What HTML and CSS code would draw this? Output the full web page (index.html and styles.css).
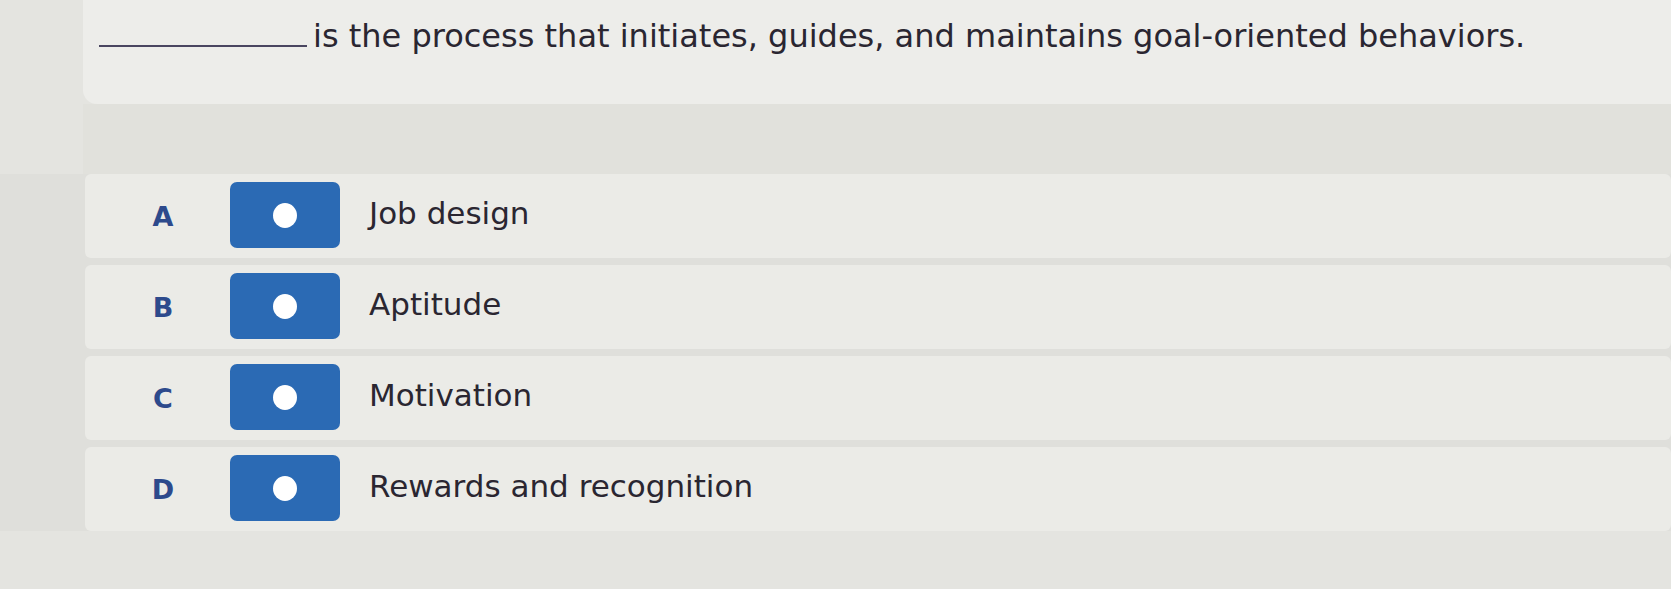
FILE: index.html
```html
<!DOCTYPE html>
<html>
<head>
<meta charset="utf-8">
<link rel="stylesheet" href="styles.css">
</head>
<body>
<div class="page">
  <div class="question-card">
    <p class="question"><span class="blank"></span> is the process that initiates, guides, and maintains goal-oriented behaviors.</p>
  </div>
  <div class="band"></div>
  <ul class="options">
    <li class="option">
      <span class="letter">A</span>
      <span class="radio"><span class="dot"></span></span>
      <span class="label">Job design</span>
    </li>
    <li class="option">
      <span class="letter">B</span>
      <span class="radio"><span class="dot"></span></span>
      <span class="label">Aptitude</span>
    </li>
    <li class="option">
      <span class="letter">C</span>
      <span class="radio"><span class="dot"></span></span>
      <span class="label">Motivation</span>
    </li>
    <li class="option">
      <span class="letter">D</span>
      <span class="radio"><span class="dot"></span></span>
      <span class="label">Rewards and recognition</span>
    </li>
  </ul>
</div>
</body>
</html>
```
FILE: styles.css
```css
html, body {
  margin: 0;
  padding: 0;
}
body {
  width: 1671px;
  height: 589px;
  overflow: hidden;
  background: #e4e4e0;
  font-family: "DejaVu Sans", sans-serif;
  color: #2a2631;
}
.page {
  display: flex;
  flex-direction: column;
}
.question-card {
  margin-left: 83px;
  height: 104px;
  background: #ededea;
  border-bottom-left-radius: 14px;
  box-sizing: border-box;
  padding: 16px 0 0 16px;
}
.question {
  margin: 0;
  font-size: 32px;
  line-height: 40px;
  display: flex;
  align-items: baseline;
  gap: 6px;
  white-space: nowrap;
}
.blank {
  display: inline-block;
  width: 208px;
  height: 0;
  border-bottom: 2px solid #4a4660;
}
.band {
  height: 70px;
  background: #e1e1dc;
  margin-left: 83px;
}
.options {
  list-style: none;
  margin: 0;
  padding: 0 0 0 85px;
  display: flex;
  flex-direction: column;
  gap: 7px;
  background: #dfdfdb;
}
.option {
  height: 84px;
  background: #ebebe7;
  border-radius: 6px;
  display: flex;
  align-items: center;
  padding-left: 64px;
}
.letter {
  width: 28px;
  text-align: center;
  font-weight: bold;
  font-size: 27px;
  color: #2d4a8c;
}
.radio {
  margin-left: 53px;
  width: 110px;
  height: 66px;
  border-radius: 7px;
  background: #2b6ab4;
  display: flex;
  align-items: center;
  justify-content: center;
  margin-top: -2px;
}
.dot {
  width: 24px;
  height: 25px;
  border-radius: 50%;
  background: #ffffff;
}
.label {
  margin-left: 29px;
  font-size: 31px;
  color: #2a2631;
  margin-top: -6px;
}
```
